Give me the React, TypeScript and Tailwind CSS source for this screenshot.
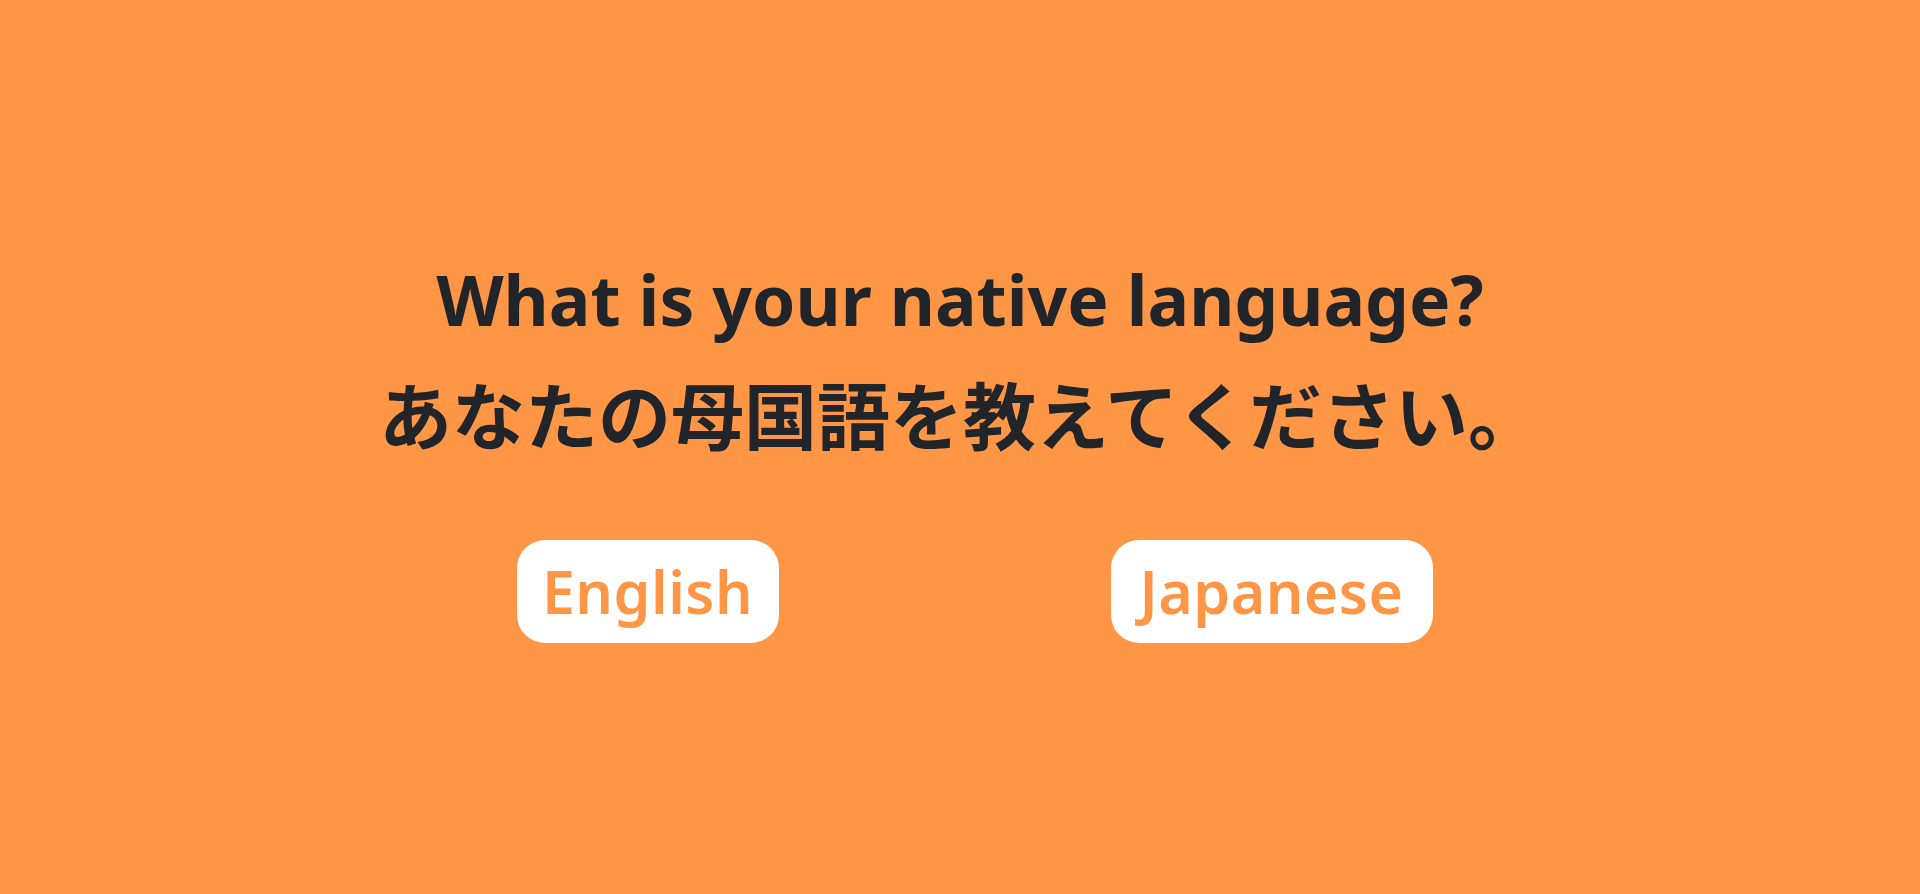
import React from "react";

export default function App() {
  return (
    <div
      className="w-full h-[894px] pt-[5px] bg-[#ff9645] flex flex-col items-center justify-center"
      style={{ fontFamily: '"Noto Sans", "Noto Sans CJK JP", sans-serif' }}
    >
      <h1 className="text-[#212529] font-bold text-[69.5px] leading-[86px] text-center">
        What is your native language?
      </h1>
      <h2
        className="text-[#212529] font-bold text-[73px] leading-[100px] text-center mt-[20px]"
        style={{ fontFamily: '"Noto Sans CJK JP", sans-serif' }}
      >
        あなたの母国語を教えてください。
      </h2>
      <div className="w-[1248px] grid grid-cols-2 justify-items-center mt-[78px]">
        <button className="h-[103px] pl-[25px] pr-[26px] bg-white rounded-[28px] text-[#ff9645] text-[59px] tracking-[0.5px] font-semibold leading-none">
          English
        </button>
        <button className="h-[103px] pl-[29px] pr-[30px] bg-white rounded-[28px] text-[#ff9645] text-[59px] tracking-[0.5px] font-semibold leading-none">
          Japanese
        </button>
      </div>
    </div>
  );
}
